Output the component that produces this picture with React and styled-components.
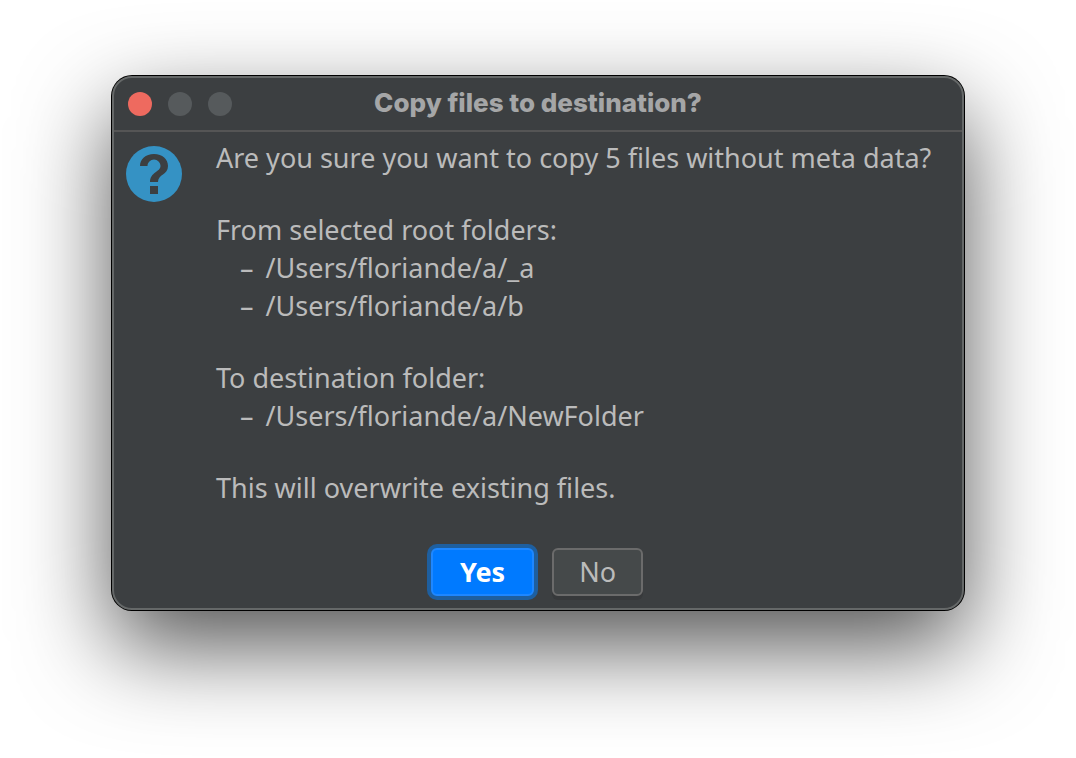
import React from "react";
import styled, { createGlobalStyle } from "styled-components";

const GlobalStyle = createGlobalStyle`
  *, *::before, *::after { box-sizing: border-box; }
  body { margin: 0; background: #fff; }
  p, ul, h1 { margin: 0; padding: 0; }
`;

const Desktop = styled.div`
  min-height: 100vh;
  padding: 76px 112px;
  overflow: hidden;
`;

const Dialog = styled.section`
  overflow: clip;
  border: 2px solid #656868;
  border-radius: 20px;
  background: #3c3f41;
  color: #bbbbbb;
  font-family: "Noto Sans", "Open Sans", sans-serif;
  font-size: 27px;
  line-height: 36px;
  box-shadow: 0 0 0 1px #000, 0 36px 92px rgba(0, 0, 0, 0.68);
`;

const TitleBar = styled.header`
  display: grid;
  grid-template-columns: 1fr auto 1fr;
  align-items: center;
  height: 54px;
  padding: 0 14px;
  border-bottom: 2px solid #555555;
`;

const WindowControls = styled.div`
  display: flex;
  gap: 16px;
`;

const WindowButton = styled.button`
  width: 24px;
  height: 24px;
  padding: 0;
  border: 0;
  border-radius: 50%;
  background: ${({ $color }) => $color};
`;

const Title = styled.h1`
  padding-bottom: 2px;
  color: #a5a6a7;
  font-family: Inter, sans-serif;
  font-size: 26px;
  font-weight: 800;
  line-height: 32px;
  white-space: nowrap;
`;

const Body = styled.div`
  display: grid;
  grid-template-columns: 56px 1fr;
  column-gap: 34px;
  padding: 8px 12px 0;
`;

const QuestionIcon = styled.svg`
  width: 56px;
  height: 56px;
  margin-top: 6px;
`;

const Message = styled.div`
  display: flex;
  flex-direction: column;
  gap: 36px;
  white-space: nowrap;
`;

const PathList = styled.ul`
  list-style: none;
`;

const PathItem = styled.li`
  display: flex;
  gap: 12px;
  margin-top: 2px;
  padding-left: 24px;
`;

const Actions = styled.footer`
  display: flex;
  justify-content: center;
  gap: 18px;
  padding: 42px 14px 12px 12px;
`;

const ActionButton = styled.button`
  height: 48px;
  padding: 0 ${({ $primary }) => ($primary ? 27 : 25)}px;
  border: 2px solid ${({ $primary }) => ($primary ? "#1e87ff" : "#6b6b6b")};
  border-radius: 6px;
  background: ${({ $primary }) => ($primary ? "#007aff" : "#45494a")};
  color: ${({ $primary }) => ($primary ? "#ffffff" : "#bbbbbb")};
  font: inherit;
  font-weight: ${({ $primary }) => ($primary ? 700 : 400)};
  box-shadow: ${({ $primary }) => ($primary ? "0 0 0 4px #1e5f9f" : "0 4px 0 #37393b")};
`;

function PathEntry({ path }) {
  return (
    <PathItem>
      <span>–</span>
      <span>{path}</span>
    </PathItem>
  );
}

export default function App() {
  return (
    <Desktop>
      <GlobalStyle />
      <Dialog role="dialog" aria-labelledby="dialog-title">
        <TitleBar>
          <WindowControls>
            <WindowButton $color="#ee6a5f" aria-label="Close" />
            <WindowButton $color="#565a5c" aria-label="Minimize" disabled />
            <WindowButton $color="#565a5c" aria-label="Zoom" disabled />
          </WindowControls>
          <Title id="dialog-title">Copy files to destination?</Title>
        </TitleBar>
        <Body>
          <QuestionIcon viewBox="0 0 56 56" aria-hidden="true">
            <circle cx="28" cy="28" r="28" fill="#3592c4" />
            <path
              d="M14 20C14 13 19.5 8 28 8S42 13 42 20C42 29 32 28 32 36H24C24 26 34.500 26 34.500 20C34.500 16.500 31.500 13.500 28 13.500S21.500 16.500 21.500 20Z"
              fill="#3c3f41"
            />
            <path d="M24 40h8v8h-8z" fill="#3c3f41" />
          </QuestionIcon>
          <Message>
            <p>Are you sure you want to copy 5 files without meta data?</p>
            <div>
              <p>From selected root folders:</p>
              <PathList>
                <PathEntry path="/Users/floriande/a/_a" />
                <PathEntry path="/Users/floriande/a/b" />
              </PathList>
            </div>
            <div>
              <p>To destination folder:</p>
              <PathList>
                <PathEntry path="/Users/floriande/a/NewFolder" />
              </PathList>
            </div>
            <p>This will overwrite existing files.</p>
          </Message>
        </Body>
        <Actions>
          <ActionButton $primary>Yes</ActionButton>
          <ActionButton>No</ActionButton>
        </Actions>
      </Dialog>
    </Desktop>
  );
}
